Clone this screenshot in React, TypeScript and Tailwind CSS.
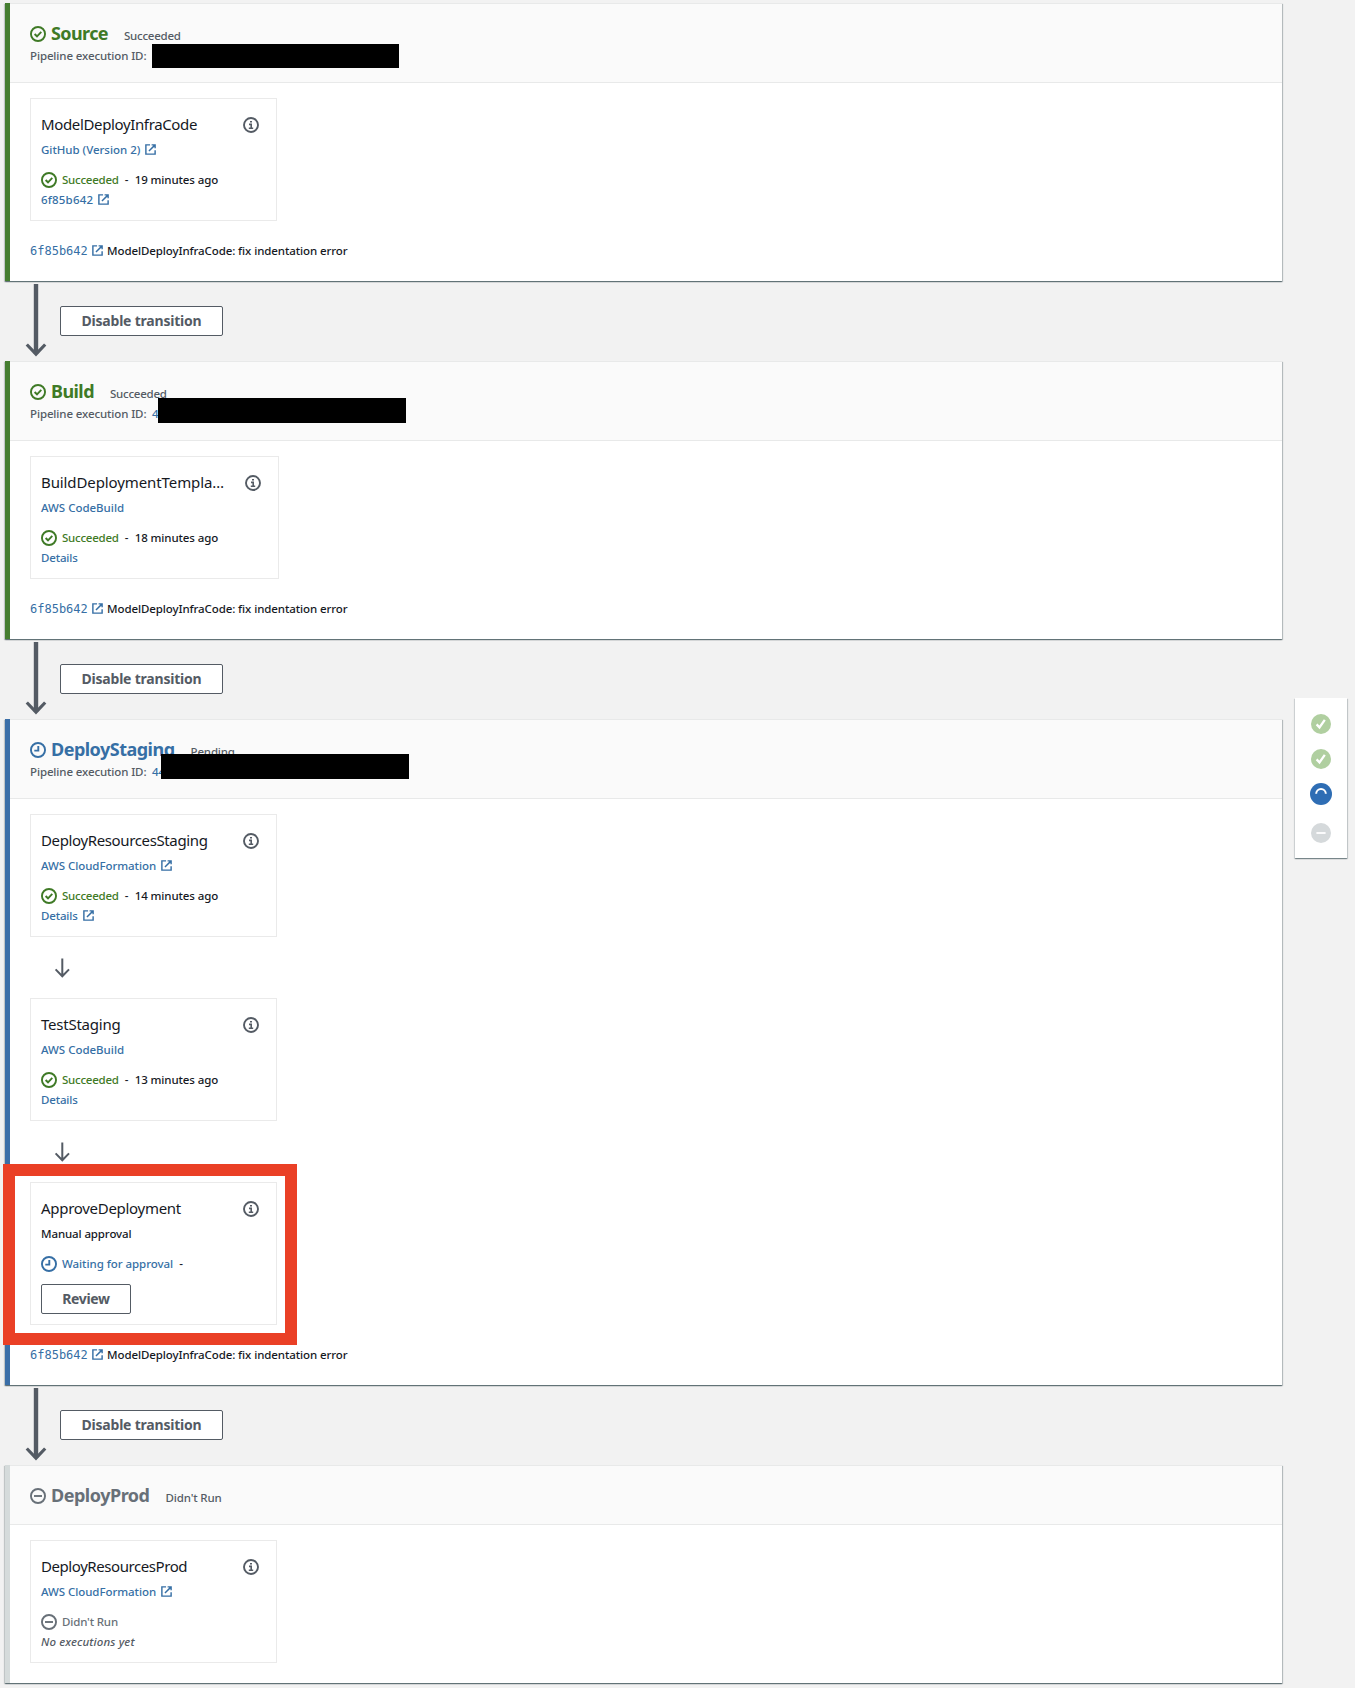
import type { ReactNode } from 'react';

type Status = 'ok' | 'pending' | 'idle';

const statusColor: Record<Status, string> = {
  ok: 'text-[#3f7a26]',
  pending: 'text-[#366fa5]',
  idle: 'text-[#687078]',
};

function StatusIcon({ status }: { status: Status }) {
  return (
    <svg
      viewBox="0 0 16 16"
      className={`size-4 shrink-0 ${statusColor[status]}`}
      fill="none"
      stroke="currentColor"
      strokeWidth="1.9"
    >
      <circle cx="8" cy="8" r="7.05" />
      {status === 'ok' && <path d="M4.6 8l2.4 2.3 4.3-4.4" />}
      {status === 'pending' && <path d="M8.3 4v4.6H4.3" />}
      {status === 'idle' && <path d="M4 8h8" />}
    </svg>
  );
}

function ExternalIcon({ className = '' }: { className?: string }) {
  return (
    <svg
      viewBox="0 0 10 10"
      className={`size-[11px] shrink-0 text-[#366fa5] ${className}`}
      fill="none"
      stroke="currentColor"
      strokeWidth="1.3"
    >
      <path d="M4.6.8H.8v8.4h8.4V5.6" />
      <path d="M6 .8h3.2v3M9.2.8L3.6 6.4" />
    </svg>
  );
}

function InfoIcon() {
  return (
    <svg viewBox="0 0 16 16" className="mt-px size-4 shrink-0 text-[#545b64]" fill="none" stroke="currentColor">
      <circle cx="8" cy="8" r="7" strokeWidth="1.9" />
      <path d="M7 4.7h2M6 7.4h2.2v4M5.8 11.3h4.4" strokeWidth="1.6" />
    </svg>
  );
}

function Button({ children, className }: { children: ReactNode; className: string }) {
  return (
    <button
      className={`flex h-[30px] items-center justify-center rounded-[2px] border border-[#545b64] bg-white text-sm leading-5 font-bold text-[#545b64] ${className}`}
    >
      {children}
    </button>
  );
}

type ActionProps = {
  name: string;
  nameTracking: string;
  provider: string;
  providerTracking: string;
  providerKind?: 'external' | 'link' | 'plain';
  status: Status;
  statusText: string;
  statusTracking: string;
  time?: string;
  wide?: boolean;
  children: ReactNode;
};

function Action(p: ActionProps) {
  const kind = p.providerKind ?? 'link';
  return (
    <div
      className={`flex flex-col border border-[#eaeaea] bg-white pt-[13px] pr-[17px] pb-[10px] pl-[10px] ${p.wide ? 'w-[249px]' : 'w-[247px]'}`}
    >
      <div className="flex h-6 items-center justify-between">
        <span className={`text-[15px] leading-6 font-normal text-[#16191f] ${p.nameTracking}`}>{p.name}</span>
        <InfoIcon />
      </div>
      <div className="mt-1 flex h-5 items-center">
        <span className={`${kind === 'plain' ? 'text-[#16191f]' : 'text-[#366fa5]'} ${p.providerTracking}`}>
          {p.provider}
        </span>
        {kind === 'external' && <ExternalIcon className="mb-px ml-[5px]" />}
      </div>
      <div className="mt-[10px] flex h-5 items-center">
        <StatusIcon status={p.status} />
        <span className={`ml-[5px] ${statusColor[p.status]} ${p.statusTracking}`}>{p.statusText}</span>
        {p.status !== 'idle' && <span className="ml-[6px] w-[10px] text-[#16191f]">-</span>}
        {p.time && <span className="tracking-[-0.11px] text-[#16191f]">{p.time}</span>}
      </div>
      {p.children}
    </div>
  );
}

function DetailLink({ children, external, className = '' }: { children: ReactNode; external?: boolean; className?: string }) {
  return (
    <div className="flex h-5 items-center text-[#366fa5]">
      <span className={className}>{children}</span>
      {external && <ExternalIcon className="mb-[2px] ml-[5px]" />}
    </div>
  );
}

function Commit() {
  return (
    <div className="mt-5 flex h-5 items-center">
      <span className="w-[62px] font-['DejaVu_Sans_Mono',monospace] text-xs leading-5 font-normal text-[#366fa5]">
        6f85b642
      </span>
      <ExternalIcon className="mb-[2px]" />
      <span className="ml-[4px] tracking-[-0.1px] text-[#16191f]">ModelDeployInfraCode: fix indentation error</span>
    </div>
  );
}

type StageProps = {
  name: string;
  nameTracking: string;
  status: Status;
  statusText: string;
  statusTracking: string;
  bar: string;
  mask?: string;
  idPrefix?: string;
  children: ReactNode;
};

function Stage(p: StageProps) {
  return (
    <section
      className={`border-l-[5px] bg-white pb-5 shadow-[0_1px_1px_0_rgba(0,28,36,0.4),1px_1px_1px_0_rgba(0,28,36,0.2),-1px_1px_1px_0_rgba(0,28,36,0.15)] ${p.bar}`}
    >
      <header className="relative border-t border-b border-[#e8e9e9] bg-[#fafafa] pt-[18px] pb-4 pl-5">
        <div className="flex h-6 items-center">
          <StatusIcon status={p.status} />
          <h2 className={`mb-[2px] ml-[5px] text-lg leading-6 font-bold ${statusColor[p.status]} ${p.nameTracking}`}>
            {p.name}
          </h2>
          <span className={`mt-[3px] ml-4 text-[#545b64] ${p.statusTracking}`}>{p.statusText}</span>
        </div>
        {p.mask && (
          <div className="flex h-5 items-center text-[#545b64]">
            <span className="w-[122px] tracking-[-0.12px]">Pipeline execution ID:</span>
            <span className="text-[#366fa5]">{p.idPrefix}</span>
          </div>
        )}
        {p.mask && <div className={`absolute bg-black ${p.mask}`} />}
      </header>
      <div className="pt-[15px] pl-5">{p.children}</div>
    </section>
  );
}

function Transition() {
  return (
    <div className="flex h-20">
      <svg
        viewBox="0 0 22 74"
        className="mt-[2px] ml-[19.5px] h-[74px] w-[22px] text-[#545b64]"
        fill="none"
        stroke="currentColor"
      >
        <path d="M11 1v70" strokeWidth="4.4" />
        <path d="M1.8 61.5l9.2 9.6 9.2-9.6" strokeWidth="3.2" />
      </svg>
      <Button className="mt-[25px] ml-[13.5px] w-[163px] tracking-[-0.21px]">Disable transition</Button>
    </div>
  );
}

function StepArrow() {
  return (
    <div className="flex h-[61px] items-center pl-[24px]">
      <svg viewBox="0 0 17 20" className="h-5 w-[17px] text-[#545b64]" fill="none" stroke="currentColor" strokeWidth="2">
        <path d="M8.3.5v17.8M1.6 11.4l6.7 6.9 6.7-6.9" />
      </svg>
    </div>
  );
}

function ProgressDot({ kind, className }: { kind: 'done' | 'active' | 'idle'; className: string }) {
  return (
    <svg viewBox="0 0 20 20" className={`shrink-0 ${className}`} fill="none" stroke="white">
      <circle cx="10" cy="10" r="10" fill="currentColor" stroke="none" />
      {kind === 'done' && <path d="M5.6 10.4l2.9 3 5.3-7.6" strokeWidth="2.3" />}
      {kind === 'active' && <path d="M5.6 9.8a4.4 4.4 0 0 1 8.8 0" strokeWidth="1.8" />}
      {kind === 'idle' && <path d="M5.4 10h9.2" strokeWidth="1.8" />}
    </svg>
  );
}

export default function App() {
  return (
    <div className="flex h-[1688px] w-[1355px] items-start overflow-hidden bg-[#f2f2f2] pl-[5px] font-['Noto_Sans','Open_Sans',sans-serif] text-[11.5px] leading-5 font-medium">
      <main className="flex w-[1277px] flex-col pt-[3px]">
        <Stage
          name="Source"
          nameTracking="tracking-[-0.6px]"
          status="ok"
          statusText="Succeeded"
          statusTracking="tracking-[-0.24px]"
          bar="border-l-[#457d30]"
          mask="top-10 left-[142px] h-6 w-[247px]"
        >
          <Action
            name="ModelDeployInfraCode"
            nameTracking="tracking-[-0.36px]"
            provider="GitHub (Version 2)"
            providerTracking="tracking-[-0.03px]"
            providerKind="external"
            status="ok"
            statusText="Succeeded"
            statusTracking="tracking-[-0.24px]"
            time="19 minutes ago"
          >
            <DetailLink external className="tracking-[0.19px]">
              6f85b642
            </DetailLink>
          </Action>
          <Commit />
        </Stage>
        <Transition />
        <Stage
          name="Build"
          nameTracking="tracking-[-0.56px]"
          status="ok"
          statusText="Succeeded"
          statusTracking="tracking-[-0.24px]"
          bar="border-l-[#457d30]"
          mask="top-9 left-[148px] h-[25px] w-[248px]"
          idPrefix="4"
        >
          <Action
            wide
            name="BuildDeploymentTempla…"
            nameTracking="tracking-[-0.1px]"
            provider="AWS CodeBuild"
            providerTracking="tracking-[-0.02px]"
            status="ok"
            statusText="Succeeded"
            statusTracking="tracking-[-0.24px]"
            time="18 minutes ago"
          >
            <DetailLink className="tracking-[-0.16px]">Details</DetailLink>
          </Action>
          <Commit />
        </Stage>
        <Transition />
        <Stage
          name="DeployStaging"
          nameTracking="tracking-[-0.51px]"
          status="pending"
          statusText="Pending"
          statusTracking="tracking-[-0.16px]"
          bar="border-l-[#3b6fa8]"
          mask="top-[34px] left-[151px] h-[25px] w-[248px]"
          idPrefix="44"
        >
          <Action
            name="DeployResourcesStaging"
            nameTracking="tracking-[-0.37px]"
            provider="AWS CloudFormation"
            providerTracking="tracking-[-0.06px]"
            providerKind="external"
            status="ok"
            statusText="Succeeded"
            statusTracking="tracking-[-0.24px]"
            time="14 minutes ago"
          >
            <DetailLink external className="tracking-[-0.16px]">
              Details
            </DetailLink>
          </Action>
          <StepArrow />
          <Action
            name="TestStaging"
            nameTracking="tracking-[-0.23px]"
            provider="AWS CodeBuild"
            providerTracking="tracking-[-0.02px]"
            status="ok"
            statusText="Succeeded"
            statusTracking="tracking-[-0.24px]"
            time="13 minutes ago"
          >
            <DetailLink className="tracking-[-0.16px]">Details</DetailLink>
          </Action>
          <StepArrow />
          <div className="relative">
            <Action
              name="ApproveDeployment"
              nameTracking="tracking-[-0.29px]"
              provider="Manual approval"
              providerTracking="tracking-[-0.12px]"
              providerKind="plain"
              status="pending"
              statusText="Waiting for approval"
              statusTracking="tracking-[-0.05px]"
            >
              <Button className="mt-[10px] w-[90px] tracking-[-0.33px]">Review</Button>
            </Action>
            <div className="absolute -top-[18px] -left-[27px] h-[181px] w-[294px] border-[12px] border-[#ea4026]" />
          </div>
          <Commit />
        </Stage>
        <Transition />
        <Stage
          name="DeployProd"
          nameTracking="tracking-[-0.48px]"
          status="idle"
          statusText="Didn't Run"
          statusTracking="tracking-[-0.16px]"
          bar="border-l-[#d5dbdb]"
        >
          <Action
            name="DeployResourcesProd"
            nameTracking="tracking-[-0.43px]"
            provider="AWS CloudFormation"
            providerTracking="tracking-[-0.06px]"
            providerKind="external"
            status="idle"
            statusText="Didn't Run"
            statusTracking="tracking-[-0.16px]"
          >
            <div className="h-5 tracking-[0.13px] text-[#545b64] italic">No executions yet</div>
          </Action>
        </Stage>
      </main>
      <aside className="mt-[698px] ml-[13px] flex h-[160px] w-[52px] flex-col items-center bg-white pt-4 shadow-[0_1px_1px_0_rgba(0,28,36,0.35),1px_1px_1px_0_rgba(0,28,36,0.15),-1px_1px_1px_0_rgba(0,28,36,0.1)]">
        <ProgressDot kind="done" className="size-5 text-[#b0cfa0]" />
        <ProgressDot kind="done" className="mt-[15px] size-5 text-[#b0cfa0]" />
        <ProgressDot kind="active" className="mt-[14px] size-[22px] text-[#2e6db4]" />
        <ProgressDot kind="idle" className="mt-[18px] size-5 text-[#d5d9db]" />
      </aside>
    </div>
  );
}
